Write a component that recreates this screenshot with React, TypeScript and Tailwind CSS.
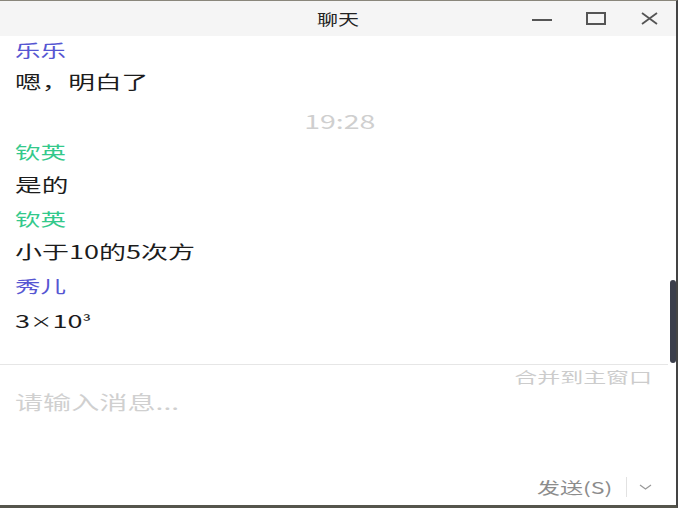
import React from "react";

const FONT = { fontFamily: '"Noto Sans CJK SC", "Noto Sans", sans-serif' };

function T({ children, className = "" }: { children: React.ReactNode; className?: string }) {
  return <span className={`inline-block ${className}`}>{children}</span>;
}

export default function App() {
  return (
    <div
      className="w-[678px] h-[508px] bg-white border-t border-r-2 border-b-[3px] border-t-[#8a877c] border-r-[#444] border-b-[#55554c] flex flex-col overflow-hidden"
      style={FONT}
    >
      {/* title bar */}
      <div className="h-[35px] bg-[#f5f5f5] flex items-center relative shrink-0">
        <div className="flex-1 flex justify-center">
          <T className="scale-x-[1.4] origin-center text-[15px] text-[#222] leading-[35px]">聊天</T>
        </div>
        <div className="absolute right-[18px] top-0 h-full flex items-center">
          <svg width="22" height="14" viewBox="0 0 22 14">
            <line x1="1" y1="8" x2="21" y2="8" stroke="#555" strokeWidth="2" />
          </svg>
          <svg className="ml-[33px]" width="20" height="14" viewBox="0 0 20 14">
            <rect x="1" y="1" width="18" height="11" fill="none" stroke="#555" strokeWidth="2" />
          </svg>
          <svg className="ml-[35px]" width="17" height="13" viewBox="0 0 17 13">
            <path d="M1 1 L16 12 M16 1 L1 12" stroke="#555" strokeWidth="1.8" fill="none" />
          </svg>
        </div>
      </div>

      {/* chat area */}
      <div className="h-[328px] relative shrink-0 pl-[15px]">
        <div className="leading-[28px] text-[17px] text-[#5656d2]"><T className="scale-x-[1.5] origin-left">乐乐</T></div>
        <div className="mt-[3px] leading-[28px] text-[18px] text-[#1c1c1c]"><T className="scale-x-[1.48] origin-left">嗯，明白了</T></div>
        <div className="mt-[12px] leading-[28px] text-[19px] text-[#cfcfcf] flex justify-center pr-[12px]">
          <T className="scale-x-[1.5] origin-center">19:28</T>
        </div>
        <div className="mt-[3px] leading-[28px] text-[17px] text-[#33c98b]"><T className="scale-x-[1.5] origin-left">钦英</T></div>
        <div className="mt-[4px] leading-[28px] text-[18px] text-[#1c1c1c]"><T className="scale-x-[1.48] origin-left">是的</T></div>
        <div className="mt-[7px] leading-[28px] text-[17px] text-[#33c98b]"><T className="scale-x-[1.5] origin-left">钦英</T></div>
        <div className="mt-[4px] leading-[28px] text-[18px] text-[#1c1c1c]"><T className="scale-x-[1.5] origin-left">小于10的5次方</T></div>
        <div className="mt-[7px] leading-[28px] text-[17px] text-[#5656d2]"><T className="scale-x-[1.5] origin-left">秀儿</T></div>
        <div className="mt-[6px] leading-[28px] text-[18px] text-[#1c1c1c]">
          <T className="scale-x-[1.5] origin-left">
            3<span className="text-[15px] relative top-[-1px]">×</span>10<span className="text-[14px] relative top-[-1px]">³</span>
          </T>
        </div>
        <div className="absolute right-0 top-[244px] w-[6px] h-[83px] rounded-[3px] bg-[#3b3e4b]" />
      </div>

      {/* divider */}
      <div className="h-px bg-[#e6e6e6] mr-[8px] shrink-0" />

      {/* input area */}
      <div className="flex-1 flex flex-col">
        <div className="flex justify-end pr-[24px] leading-[24px] text-[15px] text-[#cccccc]">
          <T className="scale-x-[1.53] origin-right">合并到主窗口</T>
        </div>
        <div className="pl-[15px] leading-[26px] text-[19px] text-[#d0d0d0]">
          <T className="scale-x-[1.48] origin-left">请输入消息...</T>
        </div>
        <div className="flex-1" />
        <div className="h-[32px] mb-[2px] flex items-center justify-end pr-[24px]">
          <T className="scale-x-[1.44] origin-right text-[16px] text-[#8c8c8c] leading-[24px]">发送(S)</T>
          <div className="w-px h-[20px] bg-[#e2e2e2] ml-[14px] mr-[12px]" />
          <svg width="13" height="8" viewBox="0 0 13 8">
            <path d="M1 2 L6.5 6 L12 2" stroke="#999" strokeWidth="1.2" fill="none" />
          </svg>
        </div>
      </div>
    </div>
  );
}
